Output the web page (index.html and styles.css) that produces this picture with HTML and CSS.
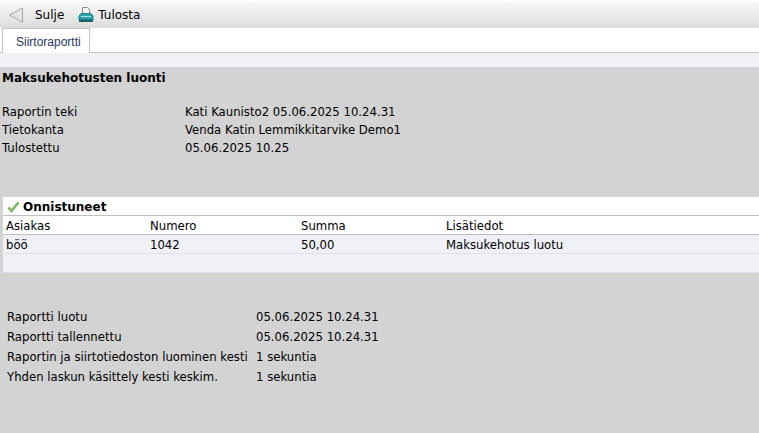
FILE: index.html
```html
<!DOCTYPE html>
<html lang="fi">
<head>
    <meta charset="UTF-8">
    <title>Siirtoraportti</title>
    <link rel="stylesheet" href="styles.css">
</head>
<body>
    <div class="toolbar">
        <div class="tool tool-close">
            <svg width="16" height="16" viewBox="0 0 16 16"><path d="M14.5 1V15L1.5 8Z" fill="#e6e6e6" stroke="#a6a6a6"/></svg>
            <span>Sulje</span>
        </div>
        <div class="tool tool-print">
            <svg width="16" height="16" viewBox="0 0 16 16">
                <path d="M4.5 .5H9.5L11.5 2.5V8H4.5Z" fill="#f4f4f4" stroke="#7f8f94"/>
                <path d="M1 9L3 6.5H13L15 9V13H1Z" fill="#2fa3ac" stroke="#24808a"/>
                <path d="M1 12.5H15V15H1Z" fill="#17606c"/>
                <path d="M3 9.5H13" stroke="#a8e0e4"/>
            </svg>
            <span>Tulosta</span>
        </div>
    </div>
    <div class="tabs">
        <div class="tab">Siirtoraportti</div>
    </div>
    <div class="tab-strip"></div>

    <div class="report">
        <h1>Maksukehotusten luonti</h1>
        <div class="info">
            <div>Raportin teki</div><div>Kati Kaunisto2 05.06.2025 10.24.31</div>
            <div>Tietokanta</div><div>Venda Katin Lemmikkitarvike Demo1</div>
            <div>Tulostettu</div><div>05.06.2025 10.25</div>
        </div>

        <div class="panel">
            <div class="panel-title">
                <svg width="13" height="12" viewBox="0 0 13 12">
                    <path d="M1.5 6.5L4.5 10L11.5 1.5" fill="none" stroke="#5c9a3c" stroke-width="2.4"/>
                    <path d="M1.5 6.5L4.5 10L11.5 1.5" fill="none" stroke="#c8e6a8" stroke-width=".8"/>
                </svg>
                <span>Onnistuneet</span>
            </div>
            <div class="row row-head">
                <div>Asiakas</div><div>Numero</div><div>Summa</div><div>Lisätiedot</div>
            </div>
            <div class="row row-data">
                <div>böö</div><div>1042</div><div>50,00</div><div>Maksukehotus luotu</div>
            </div>
            <div class="panel-foot"></div>
        </div>

        <div class="stats">
            <div>Raportti luotu</div><div>05.06.2025 10.24.31</div>
            <div>Raportti tallennettu</div><div>05.06.2025 10.24.31</div>
            <div>Raportin ja siirtotiedoston luominen kesti</div><div>1 sekuntia</div>
            <div>Yhden laskun käsittely kesti keskim.</div><div>1 sekuntia</div>
        </div>
    </div>
</body>
</html>
```

FILE: styles.css
```css
html, body {
    height: 100%;
}
body {
    margin: 0;
    background: #d3d3d3;
    color: #000;
    font-family: "DejaVu Sans", sans-serif;
    font-size: 11.7px;
    overflow: hidden;
}
.toolbar {
    height: 28px;
    box-sizing: border-box;
    display: flex;
    align-items: center;
    padding-left: 8px;
    gap: 14px;
    background: linear-gradient(#f8f8f8, #dcdcdc);
    border-top: 2px solid #fff;
    font-size: 12px;
}
.tool {
    display: flex;
    align-items: center;
    gap: 4px;
}
.tool-close {
    gap: 11px;
}
.tabs {
    height: 25px;
    box-sizing: border-box;
    padding-left: 2px;
    background: #fff;
    border-bottom: 1px solid #c4c4c4;
}
.tab {
    width: 88px;
    height: 25px;
    box-sizing: border-box;
    padding-left: 13px;
    line-height: 27px;
    font-family: "Liberation Sans", sans-serif;
    font-size: 12px;
    color: #1f3a5f;
    background: #fff;
    border: 1px solid #c4c4c4;
    border-bottom: none;
}
.tab-strip {
    height: 14px;
    background: #f0f1f6;
}
.report {
    padding-top: 3px;
}
h1 {
    margin: 0 0 0 2px;
    font-size: 12px;
    line-height: 16px;
}
.info {
    display: grid;
    grid-template-columns: 183px 1fr;
    margin: 17px 0 0 2px;
    line-height: 18px;
}
.panel {
    margin: 40px 0 0 3px;
    background: #fff;
}
.panel-title {
    height: 17px;
    padding-top: 1px;
    display: flex;
    align-items: center;
    gap: 3px;
    padding-left: 4px;
    font-size: 12px;
    font-weight: bold;
    border-bottom: 1px solid #c0c0c0;
}
.row {
    display: grid;
    grid-template-columns: 144px 151px 145px 1fr;
    padding-left: 3px;
    height: 18px;
    line-height: 20px;
}
.row-head {
    border-bottom: 1px solid #c0c0c0;
}
.row-data {
    background: #f0f1f6;
    border-bottom: 1px solid #dfe1ef;
}
.panel-foot {
    height: 18px;
    background: #f0f1f6;
    border-bottom: 1px solid #dfe1ef;
}
.stats {
    display: grid;
    grid-template-columns: 249px 1fr;
    margin: 34px 0 0 7px;
    line-height: 20px;
}
```
